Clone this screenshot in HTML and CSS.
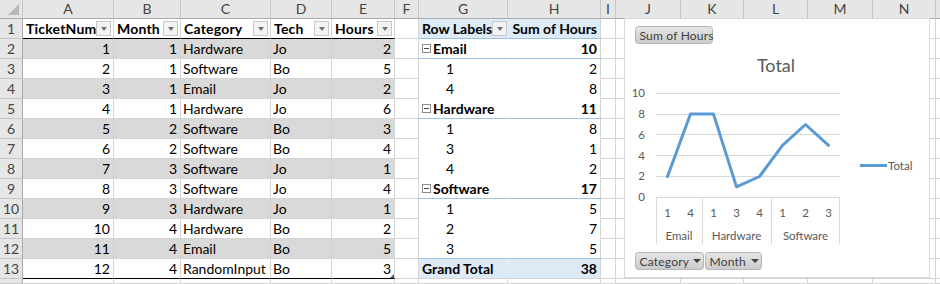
FILE: index.html
```html
<!DOCTYPE html>
<html>
<head>
<meta charset="utf-8">
<link rel="stylesheet" href="styles.css">
</head>
<body>
<div class="sheet">
  <div class="c ch corner"></div><div class="c ch">A</div><div class="c ch">B</div><div class="c ch">C</div><div class="c ch">D</div><div class="c ch">E</div><div class="c ch">F</div><div class="c ch">G</div><div class="c ch">H</div><div class="c ch">I</div><div class="c ch">J</div><div class="c ch">K</div><div class="c ch">L</div><div class="c ch">M</div><div class="c ch">N</div><div class="c ch last"></div>

  <div class="c rh">1</div><div class="c th"><span>TicketNum</span><i class="fb"></i></div><div class="c th"><span>Month</span><i class="fb"></i></div><div class="c th"><span>Category</span><i class="fb"></i></div><div class="c th"><span>Tech</span><i class="fb"></i></div><div class="c th"><span>Hours</span><i class="fb"></i></div><div class="c"></div><div class="c pg ph phl"><span>Row Labels</span><i class="fb"></i></div><div class="c ph n">Sum of Hours</div><div class="c"></div><div class="c"></div><div class="c"></div><div class="c"></div><div class="c"></div><div class="c"></div><div class="c last"></div>

  <div class="c rh">2</div><div class="c g n">1</div><div class="c g n">1</div><div class="c g">Hardware</div><div class="c g">Jo</div><div class="c g n">2</div><div class="c"></div><div class="c pg pc"><i class="exp"></i>Email</div><div class="c pc n">10</div><div class="c"></div><div class="c"></div><div class="c"></div><div class="c"></div><div class="c"></div><div class="c"></div><div class="c last"></div>

  <div class="c rh">3</div><div class="c n">2</div><div class="c n">1</div><div class="c">Software</div><div class="c">Bo</div><div class="c n">5</div><div class="c"></div><div class="c pg pv si">1</div><div class="c pv n">2</div><div class="c"></div><div class="c"></div><div class="c"></div><div class="c"></div><div class="c"></div><div class="c"></div><div class="c last"></div>

  <div class="c rh">4</div><div class="c g n">3</div><div class="c g n">1</div><div class="c g">Email</div><div class="c g">Jo</div><div class="c g n">2</div><div class="c"></div><div class="c pg pv si">4</div><div class="c pv n">8</div><div class="c"></div><div class="c"></div><div class="c"></div><div class="c"></div><div class="c"></div><div class="c"></div><div class="c last"></div>

  <div class="c rh">5</div><div class="c n">4</div><div class="c n">1</div><div class="c">Hardware</div><div class="c">Jo</div><div class="c n">6</div><div class="c"></div><div class="c pg pc"><i class="exp"></i>Hardware</div><div class="c pc n">11</div><div class="c"></div><div class="c"></div><div class="c"></div><div class="c"></div><div class="c"></div><div class="c"></div><div class="c last"></div>

  <div class="c rh">6</div><div class="c g n">5</div><div class="c g n">2</div><div class="c g">Software</div><div class="c g">Bo</div><div class="c g n">3</div><div class="c"></div><div class="c pg pv si">1</div><div class="c pv n">8</div><div class="c"></div><div class="c"></div><div class="c"></div><div class="c"></div><div class="c"></div><div class="c"></div><div class="c last"></div>

  <div class="c rh">7</div><div class="c n">6</div><div class="c n">2</div><div class="c">Software</div><div class="c">Bo</div><div class="c n">4</div><div class="c"></div><div class="c pg pv si">3</div><div class="c pv n">1</div><div class="c"></div><div class="c"></div><div class="c"></div><div class="c"></div><div class="c"></div><div class="c"></div><div class="c last"></div>

  <div class="c rh">8</div><div class="c g n">7</div><div class="c g n">3</div><div class="c g">Software</div><div class="c g">Jo</div><div class="c g n">1</div><div class="c"></div><div class="c pg pv si">4</div><div class="c pv n">2</div><div class="c"></div><div class="c"></div><div class="c"></div><div class="c"></div><div class="c"></div><div class="c"></div><div class="c last"></div>

  <div class="c rh">9</div><div class="c n">8</div><div class="c n">3</div><div class="c">Software</div><div class="c">Jo</div><div class="c n">4</div><div class="c"></div><div class="c pg pc"><i class="exp"></i>Software</div><div class="c pc n">17</div><div class="c"></div><div class="c"></div><div class="c"></div><div class="c"></div><div class="c"></div><div class="c"></div><div class="c last"></div>

  <div class="c rh">10</div><div class="c g n">9</div><div class="c g n">3</div><div class="c g">Hardware</div><div class="c g">Jo</div><div class="c g n">1</div><div class="c"></div><div class="c pg pv si">1</div><div class="c pv n">5</div><div class="c"></div><div class="c"></div><div class="c"></div><div class="c"></div><div class="c"></div><div class="c"></div><div class="c last"></div>

  <div class="c rh">11</div><div class="c n">10</div><div class="c n">4</div><div class="c">Hardware</div><div class="c">Bo</div><div class="c n">2</div><div class="c"></div><div class="c pg pv si">2</div><div class="c pv n">7</div><div class="c"></div><div class="c"></div><div class="c"></div><div class="c"></div><div class="c"></div><div class="c"></div><div class="c last"></div>

  <div class="c rh">12</div><div class="c g n">11</div><div class="c g n">4</div><div class="c g">Email</div><div class="c g">Bo</div><div class="c g n">5</div><div class="c"></div><div class="c pg pb si">3</div><div class="c pb n">5</div><div class="c"></div><div class="c"></div><div class="c"></div><div class="c"></div><div class="c"></div><div class="c"></div><div class="c last"></div>

  <div class="c rh">13</div><div class="c tb n">12</div><div class="c tb n">4</div><div class="c tb">RandomInput</div><div class="c tb">Bo</div><div class="c tb n rs">3</div><div class="c"></div><div class="c pg pt">Grand Total</div><div class="c pt n">38</div><div class="c"></div><div class="c"></div><div class="c"></div><div class="c"></div><div class="c"></div><div class="c"></div><div class="c last"></div>

  <div class="c rh"></div><div class="c"></div><div class="c"></div><div class="c"></div><div class="c"></div><div class="c"></div><div class="c"></div><div class="c"></div><div class="c"></div><div class="c"></div><div class="c"></div><div class="c"></div><div class="c"></div><div class="c"></div><div class="c"></div><div class="c last"></div>

  <div class="chart">
    <svg width="306" height="260" viewBox="624 18 306 260" xmlns="http://www.w3.org/2000/svg">
      <defs>
        <linearGradient id="btn" x1="0" y1="0" x2="0" y2="1">
          <stop offset="0" stop-color="#e6e6e6"/>
          <stop offset="1" stop-color="#cbcbcb"/>
        </linearGradient>
      </defs>
      <rect x="624.5" y="18.5" width="305" height="259" fill="#fff" stroke="#d9d9d9"/>
      <rect x="635.5" y="26.5" width="77" height="17" rx="3" fill="url(#btn)" stroke="#b5b5b5"/>
      <text class="bt" x="639.5" y="39.5">Sum of Hours</text>
      <text class="title" x="776" y="72" text-anchor="middle">Total</text>
      <g stroke="#d9d9d9" stroke-width="1">
        <line x1="656" y1="93.5" x2="840" y2="93.5"/>
        <line x1="656" y1="114.5" x2="840" y2="114.5"/>
        <line x1="656" y1="134.5" x2="840" y2="134.5"/>
        <line x1="656" y1="155.5" x2="840" y2="155.5"/>
        <line x1="656" y1="176.5" x2="840" y2="176.5"/>
        <line x1="656" y1="197.5" x2="840" y2="197.5"/>
        <line x1="656.5" y1="197.5" x2="656.5" y2="244"/>
        <line x1="702.5" y1="197.5" x2="702.5" y2="244"/>
        <line x1="771.5" y1="197.5" x2="771.5" y2="244"/>
        <line x1="839.5" y1="197.5" x2="839.5" y2="244"/>
      </g>
      <g class="ax" text-anchor="end">
        <text x="645" y="97">10</text>
        <text x="645" y="118">8</text>
        <text x="645" y="138.5">6</text>
        <text x="645" y="159.5">4</text>
        <text x="645" y="180">2</text>
        <text x="645" y="201">0</text>
      </g>
      <g class="ax" text-anchor="middle">
        <text x="667.5" y="217">1</text>
        <text x="690.5" y="217">4</text>
        <text x="713.5" y="217">1</text>
        <text x="736.5" y="217">3</text>
        <text x="759.5" y="217">4</text>
        <text x="782.5" y="217">1</text>
        <text x="805.5" y="217">2</text>
        <text x="828.5" y="217">3</text>
        <text x="679" y="240">Email</text>
        <text x="736.5" y="240">Hardware</text>
        <text x="805.5" y="240">Software</text>
      </g>
      <polyline fill="none" stroke="#5b9bd5" stroke-width="3" stroke-linejoin="round" stroke-linecap="round"
        points="667.5,176.5 690.5,114.1 713.5,114.1 736.5,186.9 759.5,176.5 782.5,145.3 805.5,124.5 828.5,145.3"/>
      <line x1="860" y1="165.5" x2="887" y2="165.5" stroke="#5b9bd5" stroke-width="3"/>
      <text class="ax" x="888" y="169.5">Total</text>
      <rect x="635.5" y="252.5" width="68" height="17" rx="3" fill="url(#btn)" stroke="#b5b5b5"/>
      <text class="bt" x="639.5" y="265.5">Category</text>
      <path d="M693 259 L701 259 L697 263 Z" fill="#404040"/>
      <rect x="705.5" y="252.5" width="56" height="17" rx="3" fill="url(#btn)" stroke="#b5b5b5"/>
      <text class="bt" x="709.5" y="265.5">Month</text>
      <path d="M751 259 L759 259 L755 263 Z" fill="#404040"/>
    </svg>
  </div>
</div>
</body>
</html>
```
FILE: styles.css
```css
html, body {
  margin: 0;
  padding: 0;
  background: #fff;
}
body {
  width: 940px;
  height: 284px;
  overflow: hidden;
  font-family: Lato, "Liberation Sans", sans-serif;
  font-size: 14px;
  color: #000;
}
.sheet {
  position: relative;
  display: grid;
  grid-template-columns: 23px 91px 67px 90px 61px 63px 24px 89px 93px 15px 65px 63px 64px 65px 63px 4px;
  grid-template-rows: 19px repeat(13, 20px) 5px;
}
.c {
  box-sizing: border-box;
  border-right: 1px solid #d4d4d4;
  border-bottom: 1px solid #d4d4d4;
  line-height: 19px;
  padding: 0 2px;
  white-space: nowrap;
  overflow: hidden;
}
.last { border-right: none; }
.ch {
  background: #e6e6e6;
  border-right-color: #c6c6c6;
  border-bottom-color: #ababab;
  text-align: center;
  color: #444;
  line-height: 18px;
  padding: 0;
}
.corner { position: relative; }
.corner::after {
  content: "";
  position: absolute;
  right: 3px;
  bottom: 3px;
  border-left: 11px solid transparent;
  border-bottom: 11px solid #b8b8b8;
}
.rh {
  background: #e6e6e6;
  border-right-color: #ababab;
  border-bottom-color: #c6c6c6;
  text-align: center;
  color: #444;
  padding: 0;
}
.n { text-align: right; padding-right: 3px; }
.g { background: #d9d9d9; }
.th {
  font-weight: bold;
  letter-spacing: 0.2px;
  display: flex;
  align-items: center;
  justify-content: space-between;
  padding: 0 2px 0 3px;
  border-bottom-color: #000;
}
.fb {
  flex: none;
  width: 15px;
  height: 15px;
  box-sizing: border-box;
  border: 1px solid #c8c8c8;
  background: #f3f3f3;
  display: flex;
  align-items: center;
  justify-content: center;
}
.fb::after {
  content: "";
  border-left: 3.5px solid transparent;
  border-right: 3.5px solid transparent;
  border-top: 4px solid #707070;
}
.pg { border-right-color: transparent; }
.pv { border-bottom-color: transparent; }
.ph {
  background: #ddebf7;
  font-weight: bold;
  border-bottom-color: #9bc2e6;
}
.phl {
  display: flex;
  align-items: center;
  justify-content: space-between;
  padding: 0 0 0 3px;
}
.pc {
  font-weight: bold;
  border-bottom-color: #9bc2e6;
}
.pc.pg {
  display: flex;
  align-items: center;
  padding-left: 3px;
}
.exp {
  flex: none;
  position: relative;
  width: 9px;
  height: 9px;
  box-sizing: border-box;
  border: 1px solid #8c8c8c;
  margin-right: 2px;
}
.exp::after {
  content: "";
  position: absolute;
  left: 1px;
  top: 3px;
  width: 5px;
  height: 1px;
  background: #444;
}
.si { padding-left: 27px; }
.pb { border-bottom-color: #9bc2e6; }
.pt {
  background: #ddebf7;
  font-weight: bold;
}
.pt.pg { padding-left: 3px; }
.tb { border-bottom-color: #000; }
.rs { position: relative; }
.rs::after {
  content: "";
  position: absolute;
  right: 0;
  bottom: 0;
  border-left: 4px solid transparent;
  border-bottom: 4px solid #3f5878;
}
.chart {
  position: absolute;
  left: 624px;
  top: 18px;
  width: 306px;
  height: 260px;
}
.chart svg { display: block; }
.bt {
  font-family: Lato, "Liberation Sans", sans-serif;
  font-size: 12px;
  letter-spacing: 0.2px;
  fill: #404040;
}
.title {
  font-family: Lato, "Liberation Sans", sans-serif;
  font-size: 18px;
  fill: #595959;
}
.ax text, text.ax {
  font-family: Lato, "Liberation Sans", sans-serif;
  font-size: 11.5px;
  fill: #595959;
}
```
